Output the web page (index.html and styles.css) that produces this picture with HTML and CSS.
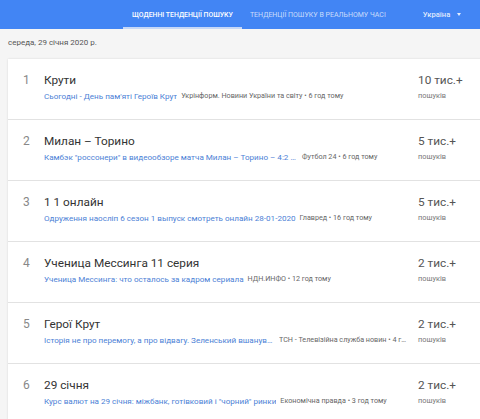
FILE: index.html
```html
<!DOCTYPE html>
<html lang="uk">
<head>
<meta charset="utf-8">
<title>Тенденції пошуку</title>
<link rel="stylesheet" href="styles.css">
</head>
<body>
<header class="top">
  <nav class="tabs">
    <a class="tab active">ЩОДЕННІ ТЕНДЕНЦІЇ ПОШУКУ</a>
    <a class="tab">ТЕНДЕНЦІЇ ПОШУКУ В РЕАЛЬНОМУ ЧАСІ</a>
  </nav>
  <div class="geo">Україна <span class="arrow"></span></div>
</header>
<div class="date">середа, 29 січня 2020 р.</div>
<main class="card">
  <div class="row">
    <div class="num">1</div>
    <div class="body">
      <div class="title">Крути</div>
      <div class="sub"><a class="link">Сьогодні - День пам'яті Героїв Крут</a><span class="src">Укрінформ. Новини України та світу • 6 год тому</span></div>
    </div>
    <div class="count"><div class="big">10 тис.+</div><div class="small">пошуків</div></div>
  </div>
  <div class="row">
    <div class="num">2</div>
    <div class="body">
      <div class="title">Милан – Торино</div>
      <div class="sub"><a class="link w2">Камбэк "россонери" в видеообзоре матча Милан – Торино – 4:2 (ВИДЕО)</a><span class="src">Футбол 24 • 6 год тому</span></div>
    </div>
    <div class="count"><div class="big">5 тис.+</div><div class="small">пошуків</div></div>
  </div>
  <div class="row">
    <div class="num">3</div>
    <div class="body">
      <div class="title">1 1 онлайн</div>
      <div class="sub"><a class="link">Одруження наосліп 6 сезон 1 выпуск смотреть онлайн 28-01-2020</a><span class="src">Главред • 16 год тому</span></div>
    </div>
    <div class="count"><div class="big">5 тис.+</div><div class="small">пошуків</div></div>
  </div>
  <div class="row">
    <div class="num">4</div>
    <div class="body">
      <div class="title">Ученица Мессинга 11 серия</div>
      <div class="sub"><a class="link">Ученица Мессинга: что осталось за кадром сериала</a><span class="src">НДН.ИНФО • 12 год тому</span></div>
    </div>
    <div class="count"><div class="big">2 тис.+</div><div class="small">пошуків</div></div>
  </div>
  <div class="row">
    <div class="num">5</div>
    <div class="body">
      <div class="title">Герої Крут</div>
      <div class="sub"><a class="link w5">Історія не про перемогу, а про відвагу. Зеленський вшанував пам'ять Героїв Крут</a><span class="src clip">ТСН - Телевізійна служба новин • 4 год тому</span></div>
    </div>
    <div class="count"><div class="big">2 тис.+</div><div class="small">пошуків</div></div>
  </div>
  <div class="row">
    <div class="num">6</div>
    <div class="body">
      <div class="title">29 січня</div>
      <div class="sub"><a class="link">Курс валют на 29 січня: міжбанк, готівковий і "чорний" ринки</a><span class="src">Економічна правда • 3 год тому</span></div>
    </div>
    <div class="count"><div class="big">2 тис.+</div><div class="small">пошуків</div></div>
  </div>
</main>
</body>
</html>
```
FILE: styles.css
```css
html, body {
  margin: 0;
  padding: 0;
  overflow: hidden;
}
body {
  background: #f5f5f5;
  font-family: Roboto, "Noto Sans", Arial, sans-serif;
  color: #333;
  width: 480px;
}
.top {
  height: 29px;
  background: #4285f4;
  display: flex;
  align-items: stretch;
  box-sizing: border-box;
}
.tabs {
  display: flex;
  margin-left: 123px;
}
.tab {
  font-size: 7px;
  color: rgba(255,255,255,0.72);
  display: flex;
  align-items: center;
  box-sizing: border-box;
  white-space: nowrap;
}
.tab.active {
  color: #fff;
  font-weight: 500;
  font-size: 6.9px;
  padding: 2px 9px 0 9px;
  border-bottom: 2px solid #c6d8f7;
}
.tab + .tab {
  margin-left: 8px;
}
.geo {
  margin-left: 37px;
  color: rgba(255,255,255,0.85);
  font-size: 7.6px;
  font-weight: 500;
  display: flex;
  align-items: center;
}
.arrow {
  width: 0;
  height: 0;
  border-left: 2.5px solid transparent;
  border-right: 2.5px solid transparent;
  border-top: 3px solid rgba(255,255,255,0.85);
  margin-left: 7px;
}
.date {
  height: 30px;
  box-sizing: border-box;
  padding: 9px 0 0 8px;
  font-size: 8px;
  color: #555;
  line-height: 10px;
}
.card {
  margin-left: 8px;
  width: 490px;
  background: #fff;
  box-shadow: 0 0 2px rgba(0,0,0,0.12);
}
.row {
  display: flex;
  height: 60px;
  border-bottom: 1px solid #e2e2e2;
}
.num {
  width: 36px;
  box-sizing: border-box;
  padding: 14px 0 0 15px;
  font-size: 12px;
  color: #888;
  line-height: 14px;
}
.body {
  width: 366px;
  padding-top: 13px;
  min-width: 0;
}
.title {
  font-size: 11.8px;
  line-height: 16px;
  color: #333;
  white-space: nowrap;
}
.sub {
  display: flex;
  margin-top: 3px;
  font-size: 8.1px;
  line-height: 10px;
  white-space: nowrap;
  width: 366px;
}
.link {
  color: #4c7fd6;
  overflow: hidden;
  text-overflow: ellipsis;
  flex: 0 1 auto;
  min-width: 0;
}
.link.w2 { max-width: 254px; }
.link.w5 { max-width: 229px; }
.src {
  color: #666;
  font-size: 7.2px;
  margin-left: 4px;
  flex: 0 0 auto;
}
.src.clip {
  flex: 0 0 auto;
  max-width: 129px;
  overflow: hidden;
  text-overflow: ellipsis;
  margin-left: 6px;
}
.count {
  margin-left: 8px;
  padding-top: 13px;
}
.big {
  font-size: 11.8px;
  line-height: 16px;
  color: #555;
  white-space: nowrap;
}
.small {
  margin-top: 3px;
  font-size: 7.4px;
  line-height: 10px;
  color: #777;
}
```
